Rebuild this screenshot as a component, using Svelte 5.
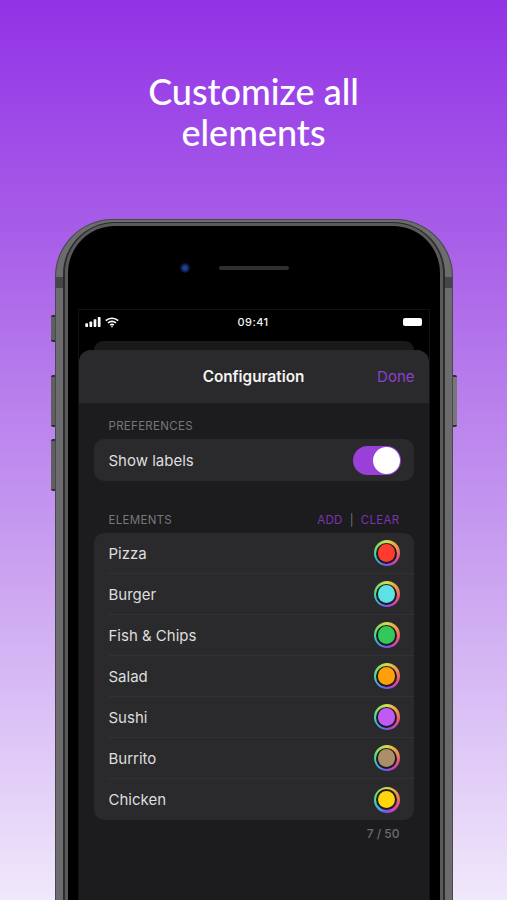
<script lang="ts">
  const elements = [
    { name: 'Pizza', color: '#ff3b30' },
    { name: 'Burger', color: '#5ce1e6' },
    { name: 'Fish & Chips', color: '#34c759' },
    { name: 'Salad', color: '#ff9f0a' },
    { name: 'Sushi', color: '#bf5af2' },
    { name: 'Burrito', color: '#ac8e68' },
    { name: 'Chicken', color: '#ffd60a' },
  ];
</script>

<div class="page">
  <h1>Customize all<br />elements</h1>

  <div class="phone">
    <span class="btn mute"></span>
    <span class="btn vol-up"></span>
    <span class="btn vol-down"></span>
    <span class="btn power"></span>
    <span class="antenna left"></span>
    <span class="antenna right"></span>

    <div class="rim">
      <div class="rim-gap">
        <div class="rim-inner">
          <div class="face">
            <div class="speaker-row">
              <span class="camera"></span>
              <span class="speaker"></span>
            </div>

            <div class="screen">
              <div class="status">
                <div class="status-left">
                  <svg width="16" height="10" viewBox="0 0 17 11" fill="#fff">
                    <rect x="0" y="7" width="3" height="4" rx="0.7" />
                    <rect x="4.6" y="5" width="3" height="6" rx="0.7" />
                    <rect x="9.2" y="2.6" width="3" height="8.4" rx="0.7" />
                    <rect x="13.8" y="0" width="3" height="11" rx="0.7" />
                  </svg>
                  <svg width="14" height="11" viewBox="0 0 14 11" fill="none" stroke="#fff" stroke-width="1.6">
                    <path d="M0.8 3.7a9 9 0 0 1 12.4 0" />
                    <path d="M3 6a5.8 5.8 0 0 1 8 0" />
                    <path d="M5.2 8.2a2.6 2.6 0 0 1 3.6 0" />
                    <circle cx="7" cy="9.7" r="0.8" fill="#fff" stroke="none" />
                  </svg>
                </div>
                <div class="time">09:41</div>
                <div class="battery"><span></span></div>
              </div>

              <div class="back-card"></div>

              <div class="sheet">
                <header>
                  <span class="title">Configuration</span>
                  <span class="done">Done</span>
                </header>

                <div class="section-head first">
                  <span>PREFERENCES</span>
                </div>
                <div class="group">
                  <div class="row pref">
                    <span>Show labels</span>
                    <div class="toggle"><span></span></div>
                  </div>
                </div>

                <div class="section-head second">
                  <span>ELEMENTS</span>
                  <div class="actions">
                    <span class="action">ADD</span>
                    <span class="sep">|</span>
                    <span class="action">CLEAR</span>
                  </div>
                </div>
                <div class="group">
                  {#each elements as el}
                    <div class="row">
                      <span>{el.name}</span>
                      <div class="ring">
                        <div class="gap">
                          <div class="dot" style:background={el.color}></div>
                        </div>
                      </div>
                    </div>
                  {/each}
                </div>
                <div class="count">7 / 50</div>
              </div>
            </div>
          </div>
        </div>
      </div>
    </div>
  </div>
</div>

<style>
  :global(body) {
    margin: 0;
  }

  .page {
    height: 900px;
    overflow: hidden;
    background: linear-gradient(180deg, #9233e6 0%, #a75ce8 25%, #c79cf0 60%, #f0e8fb 100%);
    font-family: Inter, "Liberation Sans", sans-serif;
    display: flex;
    flex-direction: column;
    align-items: center;
  }

  h1 {
    margin: 0 0 66px;
    padding-top: 71px;
    text-align: center;
    color: #fff;
    font-family: Lato, sans-serif;
    font-weight: 500;
    font-size: 36px;
    line-height: 41px;
  }

  .phone {
    position: relative;
    width: 398px;
    flex-shrink: 0;
  }

  .rim {
    height: 760px;
    box-sizing: border-box;
    border-radius: 58px;
    padding: 3px 8px 0;
    background: #6c6c6f;
    box-shadow: inset 0 0 0 1px #48484b;
  }

  .rim-gap {
    height: 100%;
    box-sizing: border-box;
    border-radius: 52px;
    padding: 1px 2px 0;
    background: #2b2b2d;
  }

  .rim-inner {
    height: 100%;
    box-sizing: border-box;
    border-radius: 50px;
    padding: 3px 3px 0;
    background: #5a5a5d;
  }

  .face {
    height: 100%;
    box-sizing: border-box;
    border-radius: 47px;
    padding: 0 11px;
    background: #000;
  }

  .btn {
    position: absolute;
    width: 4px;
    background: #5f5f62;
    border-top: 2px solid #2e2e30;
    border-bottom: 2px solid #2e2e30;
    border-radius: 2px 0 0 2px;
    box-sizing: border-box;
  }

  .mute { left: -4px; top: 96px; height: 27px; }
  .vol-up { left: -4px; top: 156px; height: 52px; }
  .vol-down { left: -4px; top: 220px; height: 52px; }
  .power { right: -4px; top: 156px; height: 52px; border-radius: 0 2px 2px 0; background: #77777a; }

  .antenna {
    position: absolute;
    top: 58px;
    width: 8px;
    height: 11px;
    background: #464649;
  }

  .antenna.left { left: 0; }
  .antenna.right { right: 0; }

  .speaker-row {
    height: 84px;
    display: flex;
    align-items: center;
    padding-left: 101px;
    box-sizing: border-box;
    gap: 29px;
  }

  .camera {
    width: 10px;
    height: 10px;
    border-radius: 50%;
    background: radial-gradient(circle, #1c3f9c 0 25%, #0e1a3a 55%, #050505 100%);
  }

  .speaker {
    width: 70px;
    height: 4px;
    border-radius: 2px;
    background: #2f2f31;
  }

  .screen {
    width: 350px;
    background: #000;
    box-shadow: 0 0 0 1px #121212;
  }

  .status {
    height: 31px;
    display: grid;
    grid-template-columns: 1fr auto 1fr;
    align-items: center;
    padding: 0 7px 7px 6px;
    box-sizing: border-box;
    color: #fff;
  }

  .status-left {
    display: flex;
    align-items: center;
    gap: 4px;
  }

  .time {
    font-size: 11px;
    font-weight: 500;
    letter-spacing: 0.4px;
    color: #f2f2f2;
  }

  .battery {
    justify-self: end;
    width: 19px;
    height: 8px;
    background: #fff;
    border-radius: 2px;
  }

  .back-card {
    height: 9px;
    margin: 0 15px;
    background: #19191a;
    border-radius: 10px 10px 0 0;
  }

  .sheet {
    background: #1c1c1e;
    border-radius: 12px 12px 0 0;
    height: 560px;
  }

  header {
    height: 53px;
    background: #2a2a2c;
    border-radius: 12px 12px 0 0;
    display: flex;
    align-items: center;
    justify-content: center;
    position: relative;
  }

  .title {
    color: #f4f4f4;
    font-size: 15.3px;
    font-weight: 600;
  }

  .done {
    position: absolute;
    right: 14px;
    color: #8f3fd0;
    font-size: 15px;
  }

  .section-head {
    display: flex;
    justify-content: space-between;
    align-items: center;
    padding: 0 29px 0 30px;
    color: #77777b;
    font-size: 11.5px;
    letter-spacing: 0.3px;
    height: 14px;
    margin-bottom: 6px;
  }

  .first { margin-top: 16px; }
  .second { margin-top: 32px; }

  .actions {
    display: flex;
    gap: 7px;
    align-items: center;
  }

  .action {
    color: #7a35b0;
  }

  .sep {
    color: #77777b;
  }

  .group {
    margin: 0 15px;
    background: #2a2a2c;
    border-radius: 10px;
  }

  .row {
    height: 41px;
    box-sizing: border-box;
    display: flex;
    align-items: center;
    justify-content: space-between;
    margin-left: 15px;
    padding-right: 14px;
    color: #dedede;
    font-size: 15px;
    border-bottom: 1px solid #323234;
  }

  .row:last-child {
    border-bottom: none;
  }

  .pref {
    height: 42px;
    padding-right: 13px;
  }

  .toggle {
    width: 48px;
    height: 29px;
    border-radius: 15px;
    background: #9a3fd8;
    display: flex;
    align-items: center;
    justify-content: flex-end;
    padding-right: 1px;
    box-sizing: border-box;
  }

  .toggle span {
    width: 27px;
    height: 27px;
    border-radius: 50%;
    background: #fff;
  }

  .ring {
    width: 26px;
    height: 26px;
    border-radius: 50%;
    background: conic-gradient(#d5dc50, #f0a040 50deg, #e8507a 110deg, #c040d0 155deg, #6a5cf0 190deg, #40a8e8 225deg, #40d8a0 265deg, #88dd60 310deg, #d5dc50);
    display: flex;
    align-items: center;
    justify-content: center;
  }

  .gap {
    width: 21px;
    height: 21px;
    border-radius: 50%;
    background: #1c1c1e;
    display: flex;
    align-items: center;
    justify-content: center;
  }

  .dot {
    width: 17.5px;
    height: 17.5px;
    border-radius: 50%;
  }

  .count {
    text-align: right;
    padding: 6px 29px 0 0;
    color: #6c6c70;
    font-size: 12px;
    font-weight: 500;
  }
</style>
